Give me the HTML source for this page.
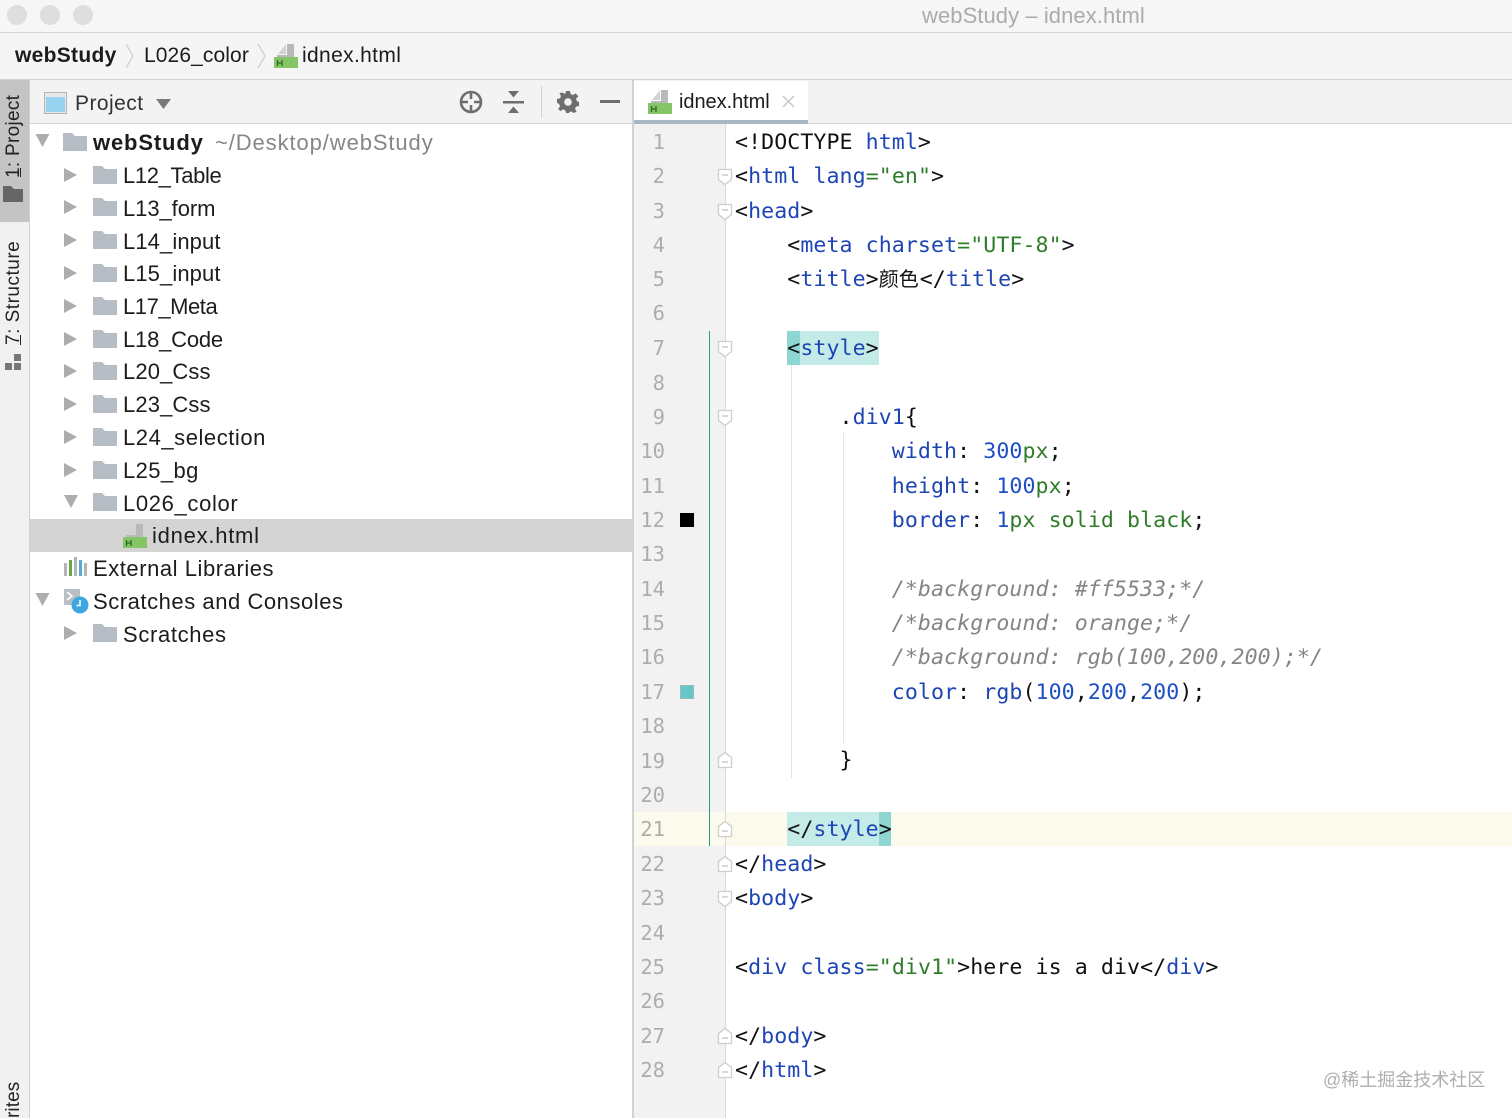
<!DOCTYPE html>
<html><head><meta charset="utf-8"><title>webStudy – idnex.html</title>
<style>
html,body{margin:0;padding:0;width:1512px;height:1118px;overflow:hidden;background:#fff}
body{position:relative;font-family:"Liberation Sans","Noto Sans CJK SC",sans-serif;color:#1c1c1c}
.a{position:absolute}
.t{position:absolute;white-space:pre;font-size:22px;line-height:32px;letter-spacing:.55px;height:32px}
.l{position:absolute;left:735px;height:34px;line-height:34px;margin-top:1px;white-space:pre;font-family:"DejaVu Sans Mono","Noto Sans CJK SC",monospace;font-size:21.6px;letter-spacing:.065px;color:#111}
.n{position:absolute;left:633px;width:32px;text-align:right;height:34px;line-height:34px;font-family:"DejaVu Sans Mono",monospace;font-size:20.5px;color:#adadad}
b.k{font-weight:normal;color:#1d46b4}
b.s{font-weight:normal;color:#2f7d2a}
b.m{font-weight:normal;color:#1d4fc4}
i{color:#858585}
svg{position:absolute;overflow:visible}
.v{position:absolute;transform-origin:0 0;transform:rotate(-90deg);white-space:pre;font-size:19px;line-height:24px;color:#222;letter-spacing:.5px}
</style></head><body>
<svg width="0" height="0" style="position:absolute"><defs>
<symbol id="folder" viewBox="0 0 24 18" overflow="visible"><path d="M0 0h9l3 3h12v15H0z" fill="#b6bdc5"/></symbol>
<symbol id="right" viewBox="0 0 14 14"><path d="M0 0l13 7L0 14z" fill="#adadad"/></symbol>
<symbol id="down" viewBox="0 0 14 14"><path d="M0 0h14L7 13z" fill="#adadad"/></symbol>
<symbol id="html" viewBox="0 0 26 26"><path d="M5 11L13 1v10z" fill="#d2d2d2"/><path d="M14 1h7v14h-7z" fill="#b9b9b9"/><path d="M4 12h17v3H4z" fill="#b9b9b9"/><path d="M1 14h24v11H1z" fill="#86c566"/><path d="M4.500 17v6M9 17v6M4.500 20h4.500" stroke="#2c6a2a" stroke-width="1.300" fill="none"/></symbol>
<symbol id="fd" viewBox="0 0 16 18"><path d="M1.500 1.500h13v10L8 16.500 1.500 11.500z" fill="#fff" stroke="#cecece" stroke-width="1.300"/><path d="M5 7h6" stroke="#c4c4c4" stroke-width="1.300"/></symbol>
<symbol id="fu" viewBox="0 0 16 18"><path d="M1.500 16.500h13v-10L8 1.500 1.500 6.500z" fill="#fff" stroke="#cecece" stroke-width="1.300"/><path d="M5 11h6" stroke="#c4c4c4" stroke-width="1.300"/></symbol>
</defs></svg>

<!-- title bar -->
<div class="a" style="left:0;top:0;width:1512px;height:32px;background:#f6f6f6;border-bottom:1px solid #d6d6d6"></div>
<div class="a" style="left:7px;top:5px;width:20px;height:20px;border-radius:50%;background:#dedede"></div>
<div class="a" style="left:40px;top:5px;width:20px;height:20px;border-radius:50%;background:#dedede"></div>
<div class="a" style="left:73px;top:5px;width:20px;height:20px;border-radius:50%;background:#dedede"></div>
<div class="t" style="left:922px;top:0;color:#ababab;letter-spacing:.07px">webStudy – idnex.html</div>

<!-- nav bar -->
<div class="a" style="left:0;top:33px;width:1512px;height:46px;background:#f5f5f5;border-bottom:1px solid #d2d2d2"></div>
<div class="t" style="left:15px;top:40px;font-weight:bold;font-size:21px;letter-spacing:.3px">webStudy</div>
<svg style="left:124px;top:43px" width="12" height="26"><path d="M2 1l7 12-7 12" fill="none" stroke="#d0d0d0" stroke-width="1.300"/></svg>
<div class="t" style="left:144px;top:40px;font-size:21px;letter-spacing:.1px">L026_color</div>
<svg style="left:256px;top:43px" width="12" height="26"><path d="M2 1l7 12-7 12" fill="none" stroke="#d0d0d0" stroke-width="1.300"/></svg>
<svg style="left:273px;top:43px" width="26" height="26"><use href="#html"/></svg>
<div class="t" style="left:302px;top:40px;font-size:21px;letter-spacing:.35px">idnex.html</div>

<!-- left strip -->
<div class="a" style="left:0;top:80px;width:29px;height:1038px;background:#f1f1f1;border-right:1px solid #d0d0d0"></div>
<div class="a" style="left:0;top:80px;width:29px;height:142px;background:#c4c4c4"></div>
<div class="v" style="left:2px;top:178px;width:90px;letter-spacing:.3px">1: Project</div>
<div class="a" style="left:20px;top:168px;width:1px;height:9px;background:#222"></div>
<svg style="left:3px;top:186px" width="20" height="16"><path d="M0 0h8l3 3h9v13H0z" fill="#666"/></svg>
<div class="v" style="left:2px;top:345px;width:110px">7: Structure</div>
<div class="a" style="left:20px;top:335px;width:1px;height:10px;background:#222"></div>
<svg style="left:5px;top:354px" width="16" height="16"><path d="M9 0h7v7H9zM0 9h7v7H0zM9 9h7v7H9z" fill="#777"/></svg>
<div class="v" style="left:2px;top:1118px;width:40px;letter-spacing:.1px">rites</div>

<!-- project header -->
<div class="a" style="left:30px;top:80px;width:602px;height:43px;background:#f3f3f3;border-bottom:1px solid #d4d4d4"></div>
<svg style="left:44px;top:92px" width="23" height="22"><path d="M.5.5h22v21H.5z" fill="#e8e8e8" stroke="#b4b4b4"/><path d="M2 5h19v15H2z" fill="#97d3ef"/></svg>
<div class="t" style="left:75px;top:88px;font-size:21px;color:#333;letter-spacing:.45px">Project</div>
<svg style="left:156px;top:99px" width="15" height="10"><path d="M0 0h15L7.500 10z" fill="#7a7a7a"/></svg>
<svg style="left:459px;top:90px" width="24" height="24" fill="none" stroke="#6e6e6e" stroke-width="2.600"><circle cx="12" cy="12" r="10"/><path d="M12 2v7M12 15v7M2 12h7M15 12h7"/></svg>
<svg style="left:503px;top:90px" width="22" height="24" fill="#6e6e6e"><path d="M0 11h21v2.500H0zM5 1h11l-5.500 6.500zM5 23h11l-5.500-6.500z"/></svg>
<div class="a" style="left:541px;top:86px;width:1px;height:32px;background:#d2d2d2"></div>
<svg style="left:557px;top:91px" width="22" height="22" viewBox="0 0 22 22"><path d="M9 0h4l.6 3 2.400 1 2.600-1.600 2.800 2.800L19 7.800l1 2.400 2 .8v4l-3 .6-1 2.400 1.600 2.600-2.800 1.400-2.600-1.600-2.400 1L13 22H9l-.6-2.600-2.400-1-2.600 1.600L1.200 18 3 15.200l-1-2.400-2-.8V8l3-.6 1-2.400L2.400 2.400 5.200 1.400 7.800 3l.6-.2z" fill="#6e6e6e"/><circle cx="11" cy="11" r="3.800" fill="#f3f3f3"/></svg>
<div class="a" style="left:600px;top:100px;width:20px;height:3px;background:#6e6e6e"></div>

<!-- tree -->
<div class="a" style="left:30px;top:519px;width:602px;height:33px;background:#d4d4d4"></div>
<svg style="left:35px;top:134px" width="15" height="14"><use href="#down"/></svg>
<svg style="left:63px;top:133px" width="24" height="18"><use href="#folder"/></svg>
<div class="t" style="left:93px;top:127px;font-weight:bold;letter-spacing:.85px">webStudy</div>
<div class="t" style="left:215px;top:127px;color:#868686;letter-spacing:.9px">~/Desktop/webStudy</div>

<svg style="left:64px;top:168px" width="14" height="14"><use href="#right"/></svg><svg style="left:93px;top:166px" width="24" height="18"><use href="#folder"/></svg><div class="t" style="left:123px;top:160px;letter-spacing:-.35px">L12_Table</div>
<svg style="left:64px;top:200px" width="14" height="14"><use href="#right"/></svg><svg style="left:93px;top:198px" width="24" height="18"><use href="#folder"/></svg><div class="t" style="left:123px;top:193px;letter-spacing:-.07px">L13_form</div>
<svg style="left:64px;top:233px" width="14" height="14"><use href="#right"/></svg><svg style="left:93px;top:231px" width="24" height="18"><use href="#folder"/></svg><div class="t" style="left:123px;top:226px;letter-spacing:.1px">L14_input</div>
<svg style="left:64px;top:266px" width="14" height="14"><use href="#right"/></svg><svg style="left:93px;top:264px" width="24" height="18"><use href="#folder"/></svg><div class="t" style="left:123px;top:258px;letter-spacing:.1px">L15_input</div>
<svg style="left:64px;top:299px" width="14" height="14"><use href="#right"/></svg><svg style="left:93px;top:297px" width="24" height="18"><use href="#folder"/></svg><div class="t" style="left:123px;top:291px;letter-spacing:-.45px">L17_Meta</div>
<svg style="left:64px;top:332px" width="14" height="14"><use href="#right"/></svg><svg style="left:93px;top:330px" width="24" height="18"><use href="#folder"/></svg><div class="t" style="left:123px;top:324px;letter-spacing:-.2px">L18_Code</div>
<svg style="left:64px;top:364px" width="14" height="14"><use href="#right"/></svg><svg style="left:93px;top:362px" width="24" height="18"><use href="#folder"/></svg><div class="t" style="left:123px;top:356px;letter-spacing:.12px">L20_Css</div>
<svg style="left:64px;top:397px" width="14" height="14"><use href="#right"/></svg><svg style="left:93px;top:395px" width="24" height="18"><use href="#folder"/></svg><div class="t" style="left:123px;top:389px;letter-spacing:.12px">L23_Css</div>
<svg style="left:64px;top:430px" width="14" height="14"><use href="#right"/></svg><svg style="left:93px;top:428px" width="24" height="18"><use href="#folder"/></svg><div class="t" style="left:123px;top:422px">L24_selection</div>
<svg style="left:64px;top:463px" width="14" height="14"><use href="#right"/></svg><svg style="left:93px;top:461px" width="24" height="18"><use href="#folder"/></svg><div class="t" style="left:123px;top:455px;letter-spacing:.4px">L25_bg</div>
<svg style="left:64px;top:495px" width="14" height="14"><use href="#down"/></svg><svg style="left:93px;top:493px" width="24" height="18"><use href="#folder"/></svg><div class="t" style="left:123px;top:488px;letter-spacing:.65px">L026_color</div>
<svg style="left:122px;top:523px" width="26" height="26"><use href="#html"/></svg><div class="t" style="left:152px;top:520px;letter-spacing:.75px">idnex.html</div>
<svg style="left:64px;top:557px" width="24" height="20"><path d="M0 6h3v13H0z" fill="#b4b4b4"/><path d="M5 3h3v16H5z" fill="#65a845"/><path d="M10 0h3v19h-3z" fill="#b4b4b4"/><path d="M15 3h3v16h-3z" fill="#5aa9d6"/><path d="M20 6h3v13h-3z" fill="#b4b4b4"/></svg>
<div class="t" style="left:93px;top:553px">External Libraries</div>
<svg style="left:35px;top:593px" width="15" height="14"><use href="#down"/></svg>
<svg style="left:64px;top:589px" width="26" height="25"><path d="M0 0h16v16H0z" fill="#b9bec4"/><path d="M3 3l5 4-5 4" stroke="#fff" stroke-width="1.600" fill="none"/><circle cx="16" cy="16" r="8.500" fill="#3da8e0"/><path d="M16 11v5.500h-3.500" stroke="#fff" stroke-width="1.500" fill="none"/></svg>
<div class="t" style="left:93px;top:586px">Scratches and Consoles</div>
<svg style="left:64px;top:626px" width="14" height="14"><use href="#right"/></svg><svg style="left:93px;top:624px" width="24" height="18"><use href="#folder"/></svg><div class="t" style="left:123px;top:619px;letter-spacing:.65px">Scratches</div>

<!-- editor -->
<div class="a" style="left:632px;top:80px;width:2px;height:1038px;background:#d2d2d2"></div>
<div class="a" style="left:634px;top:80px;width:878px;height:43px;background:#f3f3f3;border-bottom:1px solid #d4d4d4"></div>
<div class="a" style="left:634px;top:81px;width:174px;height:39px;background:#fff"></div>
<div class="a" style="left:634px;top:120px;width:174px;height:4px;background:#a9b6c4"></div>
<svg style="left:647px;top:89px" width="26" height="26"><use href="#html"/></svg>
<div class="t" style="left:679px;top:86px;font-size:20px;letter-spacing:-.05px">idnex.html</div>
<svg style="left:782px;top:95px" width="13" height="13"><path d="M1 1l11 11M12 1L1 12" stroke="#c8c8c8" stroke-width="1.500"/></svg>

<!-- gutter -->
<div class="a" style="left:634px;top:124px;width:91px;height:994px;background:#f2f2f2"></div>
<div class="a" style="left:725px;top:124px;width:1px;height:994px;background:#d8d8d8"></div>
<div class="a" style="left:634px;top:812px;width:878px;height:34px;background:#fcfaed"></div>
<div class="a" style="left:725px;top:812px;width:1px;height:34px;background:#d8d8d8"></div>
<div class="a" style="left:709px;top:331px;width:1px;height:515px;background:#2e9c84"></div>
<div class="a" style="left:680px;top:513px;width:14px;height:14px;background:#000"></div>
<div class="a" style="left:680px;top:685px;width:14px;height:14px;background:#64c8c8;box-shadow:inset 0 0 0 1px #9fb9b9"></div>
<!-- indent guides -->
<div class="a" style="left:791px;top:365px;width:1px;height:413px;background:#e4e4e4"></div>
<div class="a" style="left:843px;top:433px;width:1px;height:310px;background:#e4e4e4"></div>
<!-- highlights -->
<div class="a" style="left:787px;top:331px;width:92px;height:34px;background:#c5ebe9"></div>
<div class="a" style="left:787px;top:331px;width:13px;height:34px;background:#8fd6d2"></div>
<div class="a" style="left:787px;top:812px;width:104px;height:34px;background:#c5ebe9"></div>
<div class="a" style="left:879px;top:812px;width:12px;height:34px;background:#8fd6d2"></div>
<!-- fold icons -->
<svg style="left:717px;top:168px" width="16" height="18"><use href="#fd"/></svg>
<svg style="left:717px;top:203px" width="16" height="18"><use href="#fd"/></svg>
<svg style="left:717px;top:340px" width="16" height="18"><use href="#fd"/></svg>
<svg style="left:717px;top:409px" width="16" height="18"><use href="#fd"/></svg>
<svg style="left:717px;top:751px" width="16" height="18"><use href="#fu"/></svg>
<svg style="left:717px;top:820px" width="16" height="18"><use href="#fu"/></svg>
<svg style="left:717px;top:855px" width="16" height="18"><use href="#fu"/></svg>
<svg style="left:717px;top:890px" width="16" height="18"><use href="#fd"/></svg>
<svg style="left:717px;top:1027px" width="16" height="18"><use href="#fu"/></svg>
<svg style="left:717px;top:1061px" width="16" height="18"><use href="#fu"/></svg>

<!-- line numbers -->
<div class="n" style="top:125px">1</div><div class="n" style="top:159px">2</div><div class="n" style="top:194px">3</div><div class="n" style="top:228px">4</div><div class="n" style="top:262px">5</div><div class="n" style="top:296px">6</div><div class="n" style="top:331px">7</div><div class="n" style="top:366px">8</div><div class="n" style="top:400px">9</div><div class="n" style="top:434px">10</div><div class="n" style="top:469px">11</div><div class="n" style="top:503px">12</div><div class="n" style="top:537px">13</div><div class="n" style="top:572px">14</div><div class="n" style="top:606px">15</div><div class="n" style="top:640px">16</div><div class="n" style="top:675px">17</div><div class="n" style="top:709px">18</div><div class="n" style="top:744px">19</div><div class="n" style="top:778px">20</div><div class="n" style="top:812px">21</div><div class="n" style="top:847px">22</div><div class="n" style="top:881px">23</div><div class="n" style="top:916px">24</div><div class="n" style="top:950px">25</div><div class="n" style="top:984px">26</div><div class="n" style="top:1019px">27</div><div class="n" style="top:1053px">28</div>

<!-- code -->
<div class="l" style="top:125px">&lt;!DOCTYPE <b class="k">html</b>&gt;</div>
<div class="l" style="top:159px">&lt;<b class="k">html</b> <b class="k">lang</b><b class="s">="en"</b>&gt;</div>
<div class="l" style="top:194px">&lt;<b class="k">head</b>&gt;</div>
<div class="l" style="top:228px">    &lt;<b class="k">meta</b> <b class="k">charset</b><b class="s">="UTF-8"</b>&gt;</div>
<div class="l" style="top:262px">    &lt;<b class="k">title</b>&gt;<span style="display:inline-block;width:41px;line-height:1;letter-spacing:0;font-size:20px;font-family:'Noto Sans CJK SC',sans-serif">颜色</span>&lt;/<b class="k">title</b>&gt;</div>
<div class="l" style="top:331px">    &lt;<b class="k">style</b>&gt;</div>
<div class="l" style="top:400px">        .<b class="k">div1</b>{</div>
<div class="l" style="top:434px">            <b class="k">width</b>: <b class="m">300</b><b class="s">px</b>;</div>
<div class="l" style="top:469px">            <b class="k">height</b>: <b class="m">100</b><b class="s">px</b>;</div>
<div class="l" style="top:503px">            <b class="k">border</b>: <b class="m">1</b><b class="s">px solid black</b>;</div>
<div class="l" style="top:572px">            <i>/*background: #ff5533;*/</i></div>
<div class="l" style="top:606px">            <i>/*background: orange;*/</i></div>
<div class="l" style="top:640px">            <i>/*background: rgb(100,200,200);*/</i></div>
<div class="l" style="top:675px">            <b class="k">color</b>: <b class="k">rgb</b>(<b class="m">100</b>,<b class="m">200</b>,<b class="m">200</b>);</div>
<div class="l" style="top:743px">        }</div>
<div class="l" style="top:812px">    &lt;/<b class="k">style</b>&gt;</div>
<div class="l" style="top:847px">&lt;/<b class="k">head</b>&gt;</div>
<div class="l" style="top:881px">&lt;<b class="k">body</b>&gt;</div>
<div class="l" style="top:950px">&lt;<b class="k">div</b> <b class="k">class</b><b class="s">="div1"</b>&gt;here is a div&lt;/<b class="k">div</b>&gt;</div>
<div class="l" style="top:1019px">&lt;/<b class="k">body</b>&gt;</div>
<div class="l" style="top:1053px">&lt;/<b class="k">html</b>&gt;</div>

<div class="a" style="left:1323px;top:1068px;font-size:18px;line-height:24px;white-space:pre;color:#aeaeae;font-family:'Liberation Sans','Noto Sans CJK SC',sans-serif">@稀土掘金技术社区</div>
</body></html>
